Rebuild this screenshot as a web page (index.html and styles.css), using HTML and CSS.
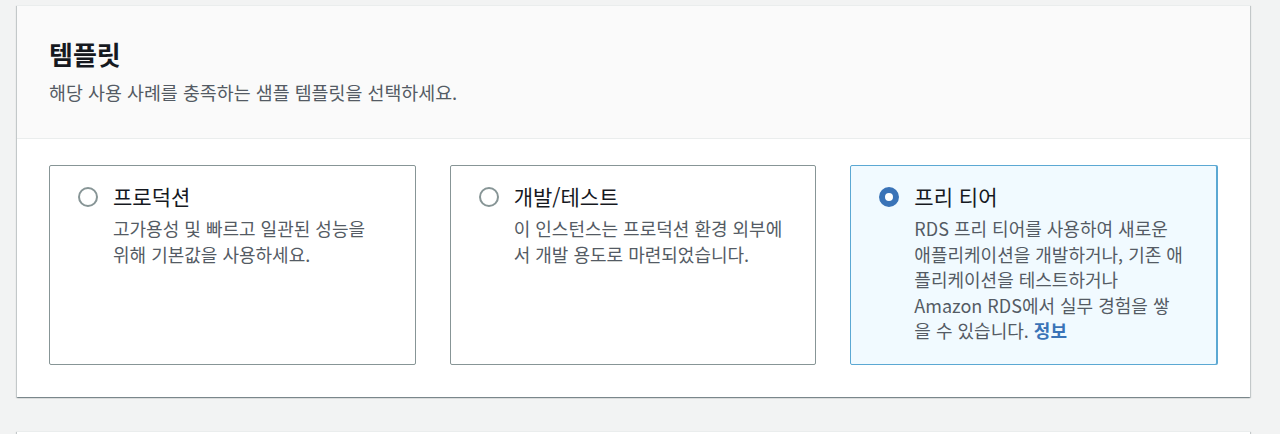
FILE: index.html
```html
<!DOCTYPE html>
<html lang="ko">
  <head>
    <meta charset="utf-8" />
    <title>템플릿</title>
    <link rel="stylesheet" href="styles.css">
  </head>
  <body>
    <div class="container">
      <div class="panel">
        <div class="panel-header">
          <h2>템플릿</h2>
          <p class="panel-desc">해당 사용 사례를 충족하는 샘플 템플릿을 선택하세요.</p>
        </div>
        <div class="panel-body">
          <div class="tiles">
            <label class="tile">
              <span class="radio"></span>
              <span class="tile-text">
                <span class="tile-title">프로덕션</span>
                <span class="tile-desc">고가용성 및 빠르고 일관된 성능을 위해 기본값을 사용하세요.</span>
              </span>
            </label>
            <label class="tile">
              <span class="radio"></span>
              <span class="tile-text">
                <span class="tile-title">개발/테스트</span>
                <span class="tile-desc">이 인스턴스는 프로덕션 환경 외부에서 개발 용도로 마련되었습니다.</span>
              </span>
            </label>
            <label class="tile selected">
              <span class="radio checked"></span>
              <span class="tile-text">
                <span class="tile-title">프리 티어</span>
                <span class="tile-desc">RDS 프리 티어를 사용하여 새로운 애플리케이션을 개발하거나, 기존 애플리케이션을 테스트하거나 Amazon RDS에서 실무 경험을 쌓을 수 있습니다. <a href="#" class="info">정보</a></span>
              </span>
            </label>
          </div>
        </div>
      </div>
      <div class="panel next"></div>
    </div>
  </body>
</html>
```

FILE: styles.css
```css
body {
  margin: 0;
  background-color: #f2f3f3;
  font-family: "Noto Sans CJK KR", "Noto Sans", sans-serif;
  color: #16191f;
}
.container {
  padding: 5px 30px 0 17px;
}
.panel {
  background-color: #fff;
  border-top: 1px solid #eaeded;
  box-shadow: 0 1px 1px 0 rgba(0, 28, 36, 0.3), 1px 1px 1px 0 rgba(0, 28, 36, 0.15), -1px 1px 1px 0 rgba(0, 28, 36, 0.15);
}
.panel.next {
  margin-top: 34px;
  height: 40px;
}
.panel-header {
  background-color: #fafafa;
  border-bottom: 1px solid #eaeded;
  padding: 30px 32px 33px;
}
h2 {
  margin: 0;
  font-size: 26px;
  line-height: 36px;
  font-weight: 700;
}
.panel-desc {
  margin: 8px 0 0;
  font-size: 18.4px;
  line-height: 25px;
  color: #545b64;
}
.panel-body {
  padding: 26px 33px 32px 32px;
}
.tiles {
  display: grid;
  grid-template-columns: repeat(3, 1fr);
  gap: 34px;
}
.tile {
  box-sizing: border-box;
  display: flex;
  gap: 15px;
  min-height: 200px;
  padding: 16px 32px 18px 28px;
  border: 1px solid #879596;
  border-radius: 2px;
}
.tile.selected {
  border-color: #5ba8d3;
  background-color: #f1faff;
  box-shadow: 1px 0 0 0 #5ba8d3;
}
.radio {
  flex: none;
  width: 20px;
  height: 20px;
  margin-top: 5px;
  box-sizing: border-box;
  border: 2px solid #879596;
  border-radius: 50%;
  background-color: #fff;
}
.radio.checked {
  border: 6px solid #3a73b7;
}
.tile-text {
  display: flex;
  flex-direction: column;
}
.tile-title {
  font-size: 21px;
  line-height: 28px;
}
.tile-desc {
  margin-top: 6px;
  font-size: 18px;
  line-height: 25.5px;
  color: #545b64;
}
.info {
  color: #3a73b7;
  font-weight: 700;
  text-decoration: none;
}
```
